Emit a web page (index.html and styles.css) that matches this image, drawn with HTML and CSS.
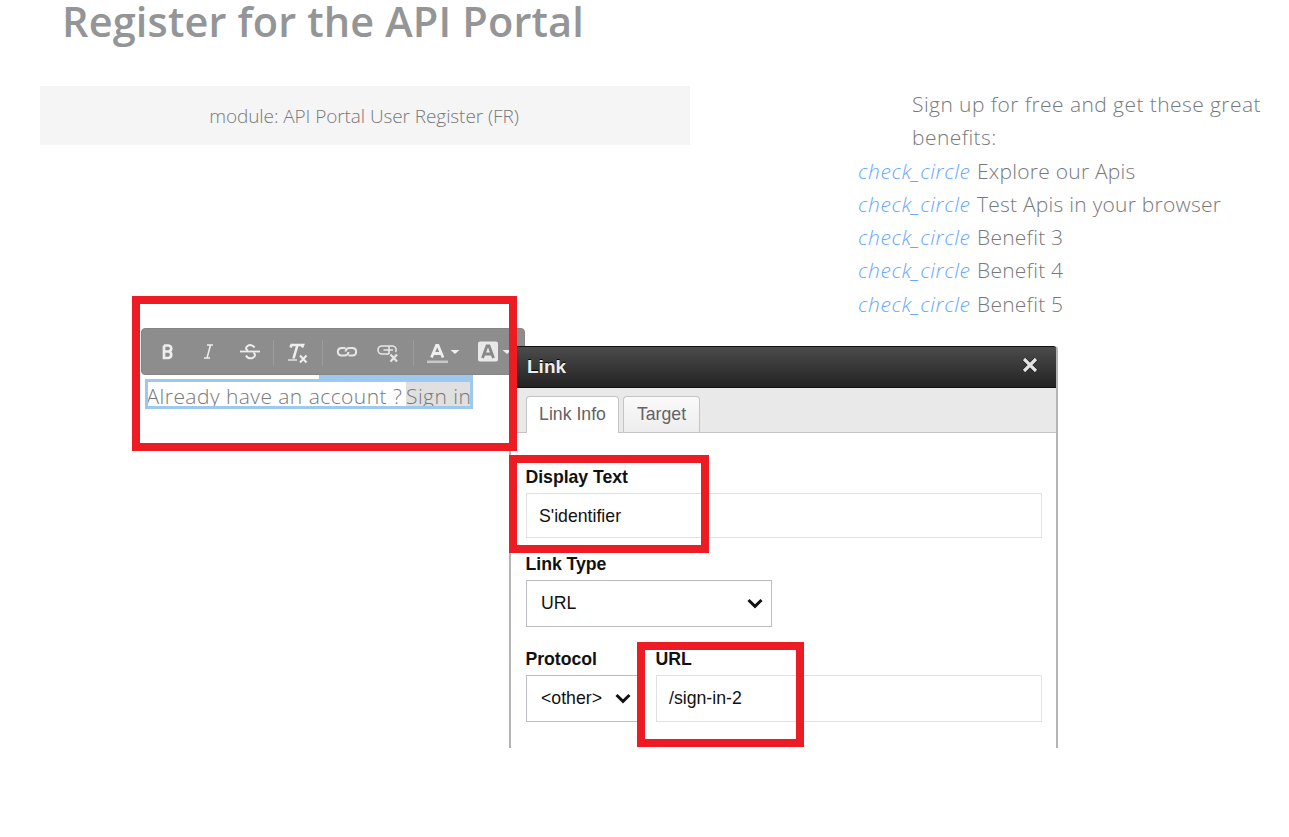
FILE: index.html
```html
<!DOCTYPE html>
<html lang="en">
<head>
<meta charset="utf-8">
<title>Register for the API Portal</title>
<link rel="stylesheet" href="styles.css">
</head>
<body>
<main class="page">
  <h1 class="title">Register for the API Portal</h1>
  <div class="columns">
    <section class="module"><span>module: API Portal User Register (FR)</span></section>
    <section class="benefits">
      <p class="intro"><span>Sign up for free and get these great</span><br><span>benefits:</span></p>
      <ul class="list">
        <li><i>check_circle</i><span>Explore our Apis</span></li>
        <li><i>check_circle</i><span>Test Apis in your browser</span></li>
        <li><i>check_circle</i><span>Benefit 3</span></li>
        <li><i>check_circle</i><span>Benefit 4</span></li>
        <li><i>check_circle</i><span>Benefit 5</span></li>
      </ul>
    </section>
  </div>

  <div class="editor-tab"></div>
  <div class="editor"><span class="account">Already have an account ? </span><span class="selected">Sign in</span></div>

  <div class="toolbar">
    <svg width="384" height="46" viewBox="0 0 384 46" fill="none">
      <g stroke="#eee">
        <path d="M22 16.500V29H26.500A3.300 3.300 0 0 0 26.500 22.500H22M26.500 22.500A3 3 0 0 0 26 16.500H22" stroke-width="2.700"/>
        <path d="M65 16H71M62 29H68M68.500 16L65 29" stroke-width="1.500"/>
        <path d="M112.500 18.500C111 15.700 107.500 15.600 105.500 17C103.500 18.300 103.500 20.500 106 21.700M111.500 23.500C114 25.500 113 28 110.500 29C107.500 29.800 105 28.500 104 26.500" stroke-width="2"/>
        <path d="M98 22.500H118" stroke-width="1.800"/>
        <path d="M148.500 18.500L149.500 16H161L160 18.500M155.500 16L151.500 29.500" stroke-width="2.600"/>
        <path d="M146 31H155" stroke-width="1.300"/>
        <path d="M158 26.500L164.500 33.500M164.500 26.500L158 33.500" stroke-width="2"/>
      </g>
      <path d="M131.500 11V37M180.500 11V37M271.500 11V37" stroke="#9c9c9c"/>
      <g stroke="#e6e6e6" stroke-width="2">
        <path d="M203.500 19H199A3.800 3.800 0 0 0 199 26.500H203A4 4 0 0 0 206.500 23M206.500 26.500H211A3.800 3.800 0 0 0 211 19H207A4 4 0 0 0 203.500 22.500"/>
        <path d="M243.500 25H240A3.800 3.800 0 0 1 240 17H251A3.800 3.800 0 0 1 253.500 23M251 21H241.500M243.500 25H247M247 17V25" stroke-width="1.600"/>
        <path d="M248.500 25.500L255 32.500M255 25.500L248.500 32.500" stroke-width="2.200"/>
      </g>
      <path d="M289.500 28.500L294.500 16.500H296L301 28.500M291.500 24.500H299" stroke="#eee" stroke-width="2.800"/>
      <path d="M285 32.800H306" stroke="#c8c8c8" stroke-width="2.500"/>
      <path d="M308.500 21H317.500L313 25ZM360.500 21H369.500L365 25Z" fill="#eee"/>
      <rect x="336" y="12.500" width="20" height="20" rx="2" fill="#e8e8e8"/>
      <path d="M340.500 29L345 17H347L351.500 29M342.500 25H349.500" stroke="#888" stroke-width="2.800"/>
    </svg>
  </div>

  <div class="dialog">
    <header class="dialog-head"><strong>Link</strong>
      <svg width="16" height="16" viewBox="0 0 16 16"><path d="M2 2L14 14M14 2L2 14" stroke="#111" stroke-width="4.500"/><path d="M2 2L14 14M14 2L2 14" stroke="#e4e4e4" stroke-width="3.200"/></svg>
    </header>
    <nav class="tabs"><span class="tab active">Link Info</span><span class="tab">Target</span></nav>
    <div class="form">
      <label>Display Text</label>
      <div class="field f1">S'identifier</div>
      <label class="l2">Link Type</label>
      <div class="select s1"><span>URL</span><svg width="16" height="11" viewBox="0 0 16 11"><path d="M1.500 2L8 8.300L14.500 2" fill="none" stroke="#111" stroke-width="3"/></svg></div>
      <div class="row">
        <div class="protocol"><label>Protocol</label>
          <div class="select s2"><span>&lt;other&gt;</span><svg width="16" height="11" viewBox="0 0 16 11"><path d="M1.500 2L8 8.300L14.500 2" fill="none" stroke="#111" stroke-width="3"/></svg></div></div>
        <div class="url"><label>URL</label>
          <div class="field f2">/sign-in-2</div></div>
      </div>
    </div>
  </div>

  <div class="mark mark-editor"></div>
  <div class="mark mark-text"></div>
  <div class="mark mark-url"></div>
</main>
</body>
</html>
```
FILE: styles.css
```css
* { box-sizing: border-box; }
body { margin: 0; background: #fff; }
.page { position: relative; width: 1289px; height: 837px; font-family: "Open Sans", "Noto Sans", sans-serif; color: #77797b; }
.title { margin: 0; height: 86px; padding-left: 62px; font-size: 41.500px; font-weight: 600; line-height: 43px; letter-spacing: 0.150px; white-space: nowrap; color: #939597; }
.columns { display: flex; justify-content: space-between; padding: 0 0 0 40px; }
.module { width: 650px; height: 59px; padding-right: 2px; background: #f5f5f5; text-align: center; font-size: 19px; font-weight: 300; line-height: 61px; letter-spacing: -0.080px; white-space: nowrap; }
.benefits { width: 431px; font-size: 21px; line-height: 33.300px; letter-spacing: 0.240px; white-space: nowrap; font-weight: 300; padding-top: 2px; }
.intro { margin: 0 0 0 54px; letter-spacing: 0.430px; }
.list { margin: 0; padding: 0; list-style: none; }
.list li { display: flex; gap: 6px; }
.list i { width: 113px; color: #66a8ff; letter-spacing: 0.560px; }
.editor-tab { position: absolute; left: 319px; top: 374px; width: 154px; height: 8px; background: #9ec9ef; }
.editor { position: absolute; left: 145px; top: 379px; width: 328px; height: 30px; border: 3px solid #9ec9ef; overflow: hidden; font-size: 21px; font-weight: 300; line-height: 28px; letter-spacing: 0.450px; white-space: nowrap; display: flex; }
.account { width: 258px; flex: none; text-indent: -1.500px; }
.selected { background: #e0e0e0; width: 64px; flex: none; }
.toolbar { position: absolute; left: 141px; top: 328px; width: 384px; height: 47px; background: #8d8d8d; border: 1px solid #858585; border-radius: 4px; }
.toolbar svg { display: block; }
.dialog { position: absolute; left: 509px; top: 346px; width: 549px; height: 402px; overflow: hidden; background: #fff; border: 2px solid #b4b4b4; border-top: 0; border-bottom: 0; border-radius: 4px 4px 0 0; font-family: "Liberation Sans", Arial, sans-serif; font-size: 17.700px; color: #111; }
.dialog-head { height: 42px; margin: 0 -1px; padding: 0 18px 3px 16px; display: flex; align-items: center; justify-content: space-between; background: linear-gradient(#4b4b4b, #232323); border: 1px solid #111; border-radius: 3px 3px 0 0; color: #eee; font-size: 19px; text-shadow: 0 -1px 0 #000; }
.dialog-head strong { padding-top: 3px; }
.dialog-head svg { margin-top: -2px; }
.tabs { height: 45px; display: flex; align-items: flex-end; gap: 4px; padding-left: 15px; background: #e9e9e9; border-bottom: 1px solid #c4c4c4; }
.tab { height: 36px; border: 1px solid #c4c4c4; border-bottom: 0; border-radius: 4px 4px 0 0; background: linear-gradient(#fafafa, #ededed); color: #636363; line-height: 35px; text-align: center; width: 77px; white-space: nowrap; }
.tab.active { width: 93px; height: 37px; margin-bottom: -1px; background: #fff; }
.form { padding: 33px 14px 0 15px; }
.form label { display: block; font-weight: bold; line-height: 22px; letter-spacing: -0.040px; text-indent: -0.500px; white-space: nowrap; }
.field, .select { height: 46px; margin-top: 5px; border: 1px solid #e2e2e2; padding: 0 12px; display: flex; align-items: center; justify-content: space-between; white-space: nowrap; }
.field.f1 { height: 45px; padding-top: 2px; }
.select { border: 1px solid #babdc2; padding: 0 8px 0 14px; }
.form .l2 { margin-top: 15px; }
.s1 { width: 246px; height: 47px; }
.row { display: flex; margin-top: 21px; }
.protocol { width: 130px; }
.s2 { width: 114px; height: 47px; }
.url { flex: 1; }
.f2 { height: 47px; }
.mark { position: absolute; border: 8px solid #ed1c24; }
.mark-editor { left: 132px; top: 296px; width: 385px; height: 155px; }
.mark-text { left: 509px; top: 455px; width: 200px; height: 98px; }
.mark-url { left: 637px; top: 642px; width: 167px; height: 105px; }
```
